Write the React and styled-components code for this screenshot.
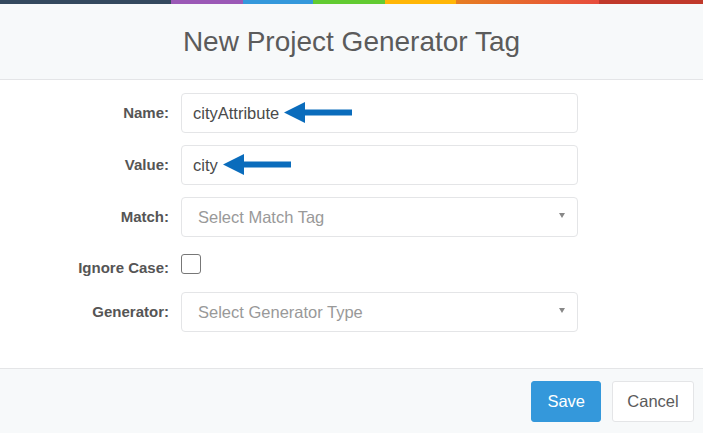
import React from 'react';
import styled, { createGlobalStyle } from 'styled-components';

const GlobalStyle = createGlobalStyle`
  html, body {
    margin: 0;
    padding: 0;
    background: #ffffff;
    font-family: "Liberation Sans", Arial, sans-serif;
  }
`;

const Modal = styled.div`
  width: 703px;
  height: 433px;
  display: flex;
  flex-direction: column;
  background: #fff;
  overflow: hidden;
`;

const ColorLine = styled.div`
  height: 4px;
  background: linear-gradient(
    to right,
    #34495e, #34495e 24.3%,
    #9b59b6 24.3%, #9b59b6 34.6%,
    #3498db 34.6%, #3498db 44.5%,
    #62cb31 44.5%, #62cb31 54.8%,
    #ffb606 54.8%, #ffb606 64.9%,
    #e67e22 64.9%, #e74c3c 85.2%,
    #c0392b 85.2%, #c0392b 100%
  );
`;

const Header = styled.div`
  height: 75px;
  display: flex;
  align-items: center;
  justify-content: center;
  background: #f7f9fa;
  border-bottom: 1px solid #e4e5e7;
`;

const Title = styled.h4`
  margin: 0;
  font-size: 28px;
  font-weight: 400;
  color: #5b5b5b;
`;

const Body = styled.div`
  flex: 1;
  padding: 13px 0 0;
  display: flex;
  flex-direction: column;
  gap: 12px;
`;

const Row = styled.div`
  display: grid;
  grid-template-columns: 169px 397px;
  column-gap: 12px;
  align-items: ${(p) => (p.$top ? 'start' : 'center')};
  height: ${(p) => (p.$top ? '31px' : 'auto')};
`;

const Label = styled.label`
  text-align: right;
  font-size: 15px;
  font-weight: 700;
  color: #555;
  line-height: 20px;
  margin-top: ${(p) => (p.$offset ? '9px' : '0')};
`;

const Field = styled.div`
  box-sizing: border-box;
  height: 40px;
  display: flex;
  align-items: center;
  padding: 0 ${(p) => (p.$select ? '12px' : '11px')} 0 ${(p) => (p.$select ? '16px' : '11px')};
  border: 1px solid #e4e5e7;
  border-radius: 4px;
  background: #fff;
  font-size: 16.5px;
  color: ${(p) => (p.$placeholder ? '#999' : '#4a4a4a')};
`;

const Caret = styled.span`
  margin-left: auto;
  width: 0;
  height: 0;
  border-left: 3.5px solid transparent;
  border-right: 3.5px solid transparent;
  border-top: 5px solid #888;
  margin-top: -3px;
`;

const Checkbox = styled.span`
  box-sizing: border-box;
  display: block;
  width: 20px;
  height: 20px;
  margin-top: 5px;
  border: 1.5px solid #777;
  border-radius: 3px;
  background: #fff;
`;

const Footer = styled.div`
  height: 65px;
  box-sizing: border-box;
  display: flex;
  justify-content: flex-end;
  align-items: flex-start;
  gap: 11px;
  padding: 12px 9px 0 0;
  background: #f7f9fa;
  border-top: 1px solid #e4e5e7;
`;

const Button = styled.button`
  height: 41px;
  padding: 0 ${(p) => (p.$primary ? '15px' : '14px')};
  border-radius: 3px;
  font-family: "Liberation Sans", Arial, sans-serif;
  font-size: 16.5px;
  border: 1px solid ${(p) => (p.$primary ? '#3498db' : '#e4e5e7')};
  background: ${(p) => (p.$primary ? '#3498db' : '#fff')};
  color: ${(p) => (p.$primary ? '#fff' : '#5b5b5b')};
  min-width: ${(p) => (p.$primary ? '69px' : '82px')};
`;

const Arrow = () => (
  <svg width="68" height="22" viewBox="0 0 68 22" style={{ marginLeft: 5, display: 'block' }}>
    <path d="M0 10.5 L21 0 L21 7.5 L68 7.5 L68 13.5 L21 13.5 L21 21 Z" fill="#0a6cbc" />
  </svg>
);

export default function App() {
  return (
    <>
      <GlobalStyle />
      <Modal>
        <ColorLine />
        <Header>
          <Title>New Project Generator Tag</Title>
        </Header>
        <Body>
          <Row>
            <Label>Name:</Label>
            <Field>
              cityAttribute
              <Arrow />
            </Field>
          </Row>
          <Row>
            <Label>Value:</Label>
            <Field>
              city
              <Arrow />
            </Field>
          </Row>
          <Row>
            <Label>Match:</Label>
            <Field $select $placeholder>
              Select Match Tag
              <Caret />
            </Field>
          </Row>
          <Row $top>
            <Label $offset>Ignore Case:</Label>
            <Checkbox />
          </Row>
          <Row>
            <Label>Generator:</Label>
            <Field $select $placeholder>
              Select Generator Type
              <Caret />
            </Field>
          </Row>
        </Body>
        <Footer>
          <Button $primary>Save</Button>
          <Button>Cancel</Button>
        </Footer>
      </Modal>
    </>
  );
}
